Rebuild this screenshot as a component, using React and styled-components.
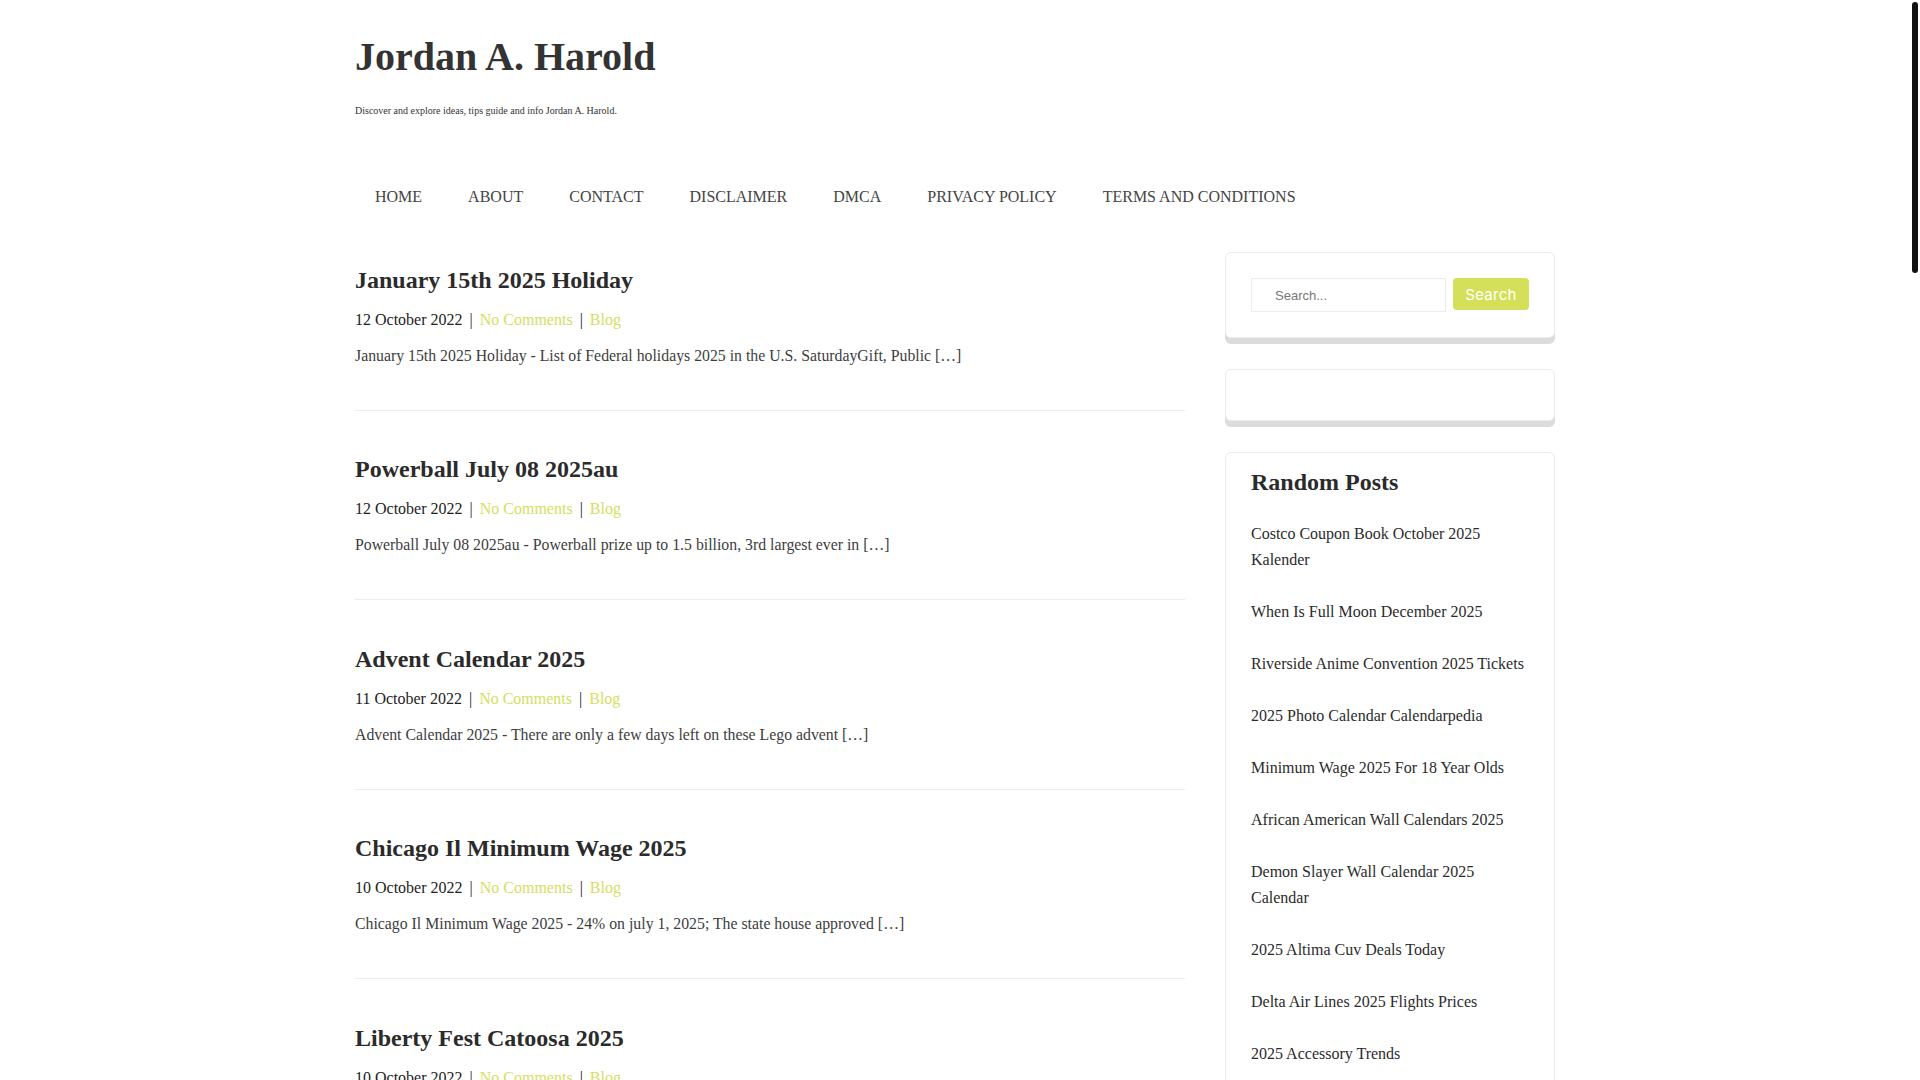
import React from "react";
import styled, { createGlobalStyle } from "styled-components";

const posts = [
  {
    title: "January 15th 2025 Holiday",
    date: "12 October 2022",
    excerpt:
      "January 15th 2025 Holiday - List of Federal holidays 2025 in the U.S. SaturdayGift, Public […]",
  },
  {
    title: "Powerball July 08 2025au",
    date: "12 October 2022",
    excerpt:
      "Powerball July 08 2025au - Powerball prize up to 1.5 billion, 3rd largest ever in […]",
  },
  {
    title: "Advent Calendar 2025",
    date: "11 October 2022",
    excerpt:
      "Advent Calendar 2025 - There are only a few days left on these Lego advent […]",
  },
  {
    title: "Chicago Il Minimum Wage 2025",
    date: "10 October 2022",
    excerpt:
      "Chicago Il Minimum Wage 2025 - 24% on july 1, 2025; The state house approved […]",
  },
  {
    title: "Liberty Fest Catoosa 2025",
    date: "10 October 2022",
    excerpt:
      "Liberty Fest Catoosa 2025 - Celebrate the fourth of july with fireworks, live music and […]",
  },
  {
    title: "Nfl Schedule 2025 Week 1",
    date: "09 October 2022",
    excerpt:
      "Nfl Schedule 2025 Week 1 - The full regular season schedule has been released, and […]",
  },
  {
    title: "Easter Sunday 2025 Date",
    date: "09 October 2022",
    excerpt:
      "Easter Sunday 2025 Date - Easter falls on a different date each year, this year […]",
  },
  {
    title: "Memorial Day Weekend 2025 Events",
    date: "08 October 2022",
    excerpt:
      "Memorial Day Weekend 2025 Events - Parades, concerts and family friendly activities across […]",
  },
  {
    title: "Printable 2025 Monthly Calendar",
    date: "08 October 2022",
    excerpt:
      "Printable 2025 Monthly Calendar - Free templates for every month of the year in […]",
  },
  {
    title: "Mardi Gras 2025 Parade Schedule",
    date: "07 October 2022",
    excerpt:
      "Mardi Gras 2025 Parade Schedule - Find out when and where each krewe will roll […]",
  },
  {
    title: "Tax Brackets 2025 Married Filing Jointly",
    date: "07 October 2022",
    excerpt:
      "Tax Brackets 2025 Married Filing Jointly - The irs has announced the new income […]",
  },
  {
    title: "Spring Break 2025 Dates",
    date: "06 October 2022",
    excerpt:
      "Spring Break 2025 Dates - Most schools and universities will take their break in […]",
  },
  {
    title: "Super Bowl 2025 Halftime Show",
    date: "06 October 2022",
    excerpt:
      "Super Bowl 2025 Halftime Show - The headliner for the big game has been announced […]",
  },
  {
    title: "Lunar New Year 2025 Animal",
    date: "05 October 2022",
    excerpt:
      "Lunar New Year 2025 Animal - The new year begins on january 29 and is the year […]",
  },
  {
    title: "Black Friday 2025 Deals",
    date: "05 October 2022",
    excerpt:
      "Black Friday 2025 Deals - The best early discounts on tech, home goods and […]",
  },
  {
    title: "Thanksgiving 2025 Date",
    date: "04 October 2022",
    excerpt:
      "Thanksgiving 2025 Date - Thanksgiving is celebrated on the fourth thursday of november […]",
  },
  {
    title: "Summer Solstice 2025 Time",
    date: "04 October 2022",
    excerpt:
      "Summer Solstice 2025 Time - The longest day of the year arrives in june when […]",
  },
  {
    title: "Ramadan 2025 Start Date",
    date: "03 October 2022",
    excerpt:
      "Ramadan 2025 Start Date - The holy month is expected to begin on the evening of […]",
  },
  {
    title: "Fourth Of July 2025 Fireworks",
    date: "03 October 2022",
    excerpt:
      "Fourth Of July 2025 Fireworks - Where to watch the biggest displays near you this […]",
  },
  {
    title: "Labor Day 2025 Sales",
    date: "02 October 2022",
    excerpt:
      "Labor Day 2025 Sales - Shop the last big sales weekend of the summer season with […]",
  },
];

const randomPosts = [
  "Costco Coupon Book October 2025 Kalender",
  "When Is Full Moon December 2025",
  "Riverside Anime Convention 2025 Tickets",
  "2025 Photo Calendar Calendarpedia",
  "Minimum Wage 2025 For 18 Year Olds",
  "African American Wall Calendars 2025",
  "Demon Slayer Wall Calendar 2025 Calendar",
  "2025 Altima Cuv Deals Today",
  "Delta Air Lines 2025 Flights Prices",
  "2025 Accessory Trends",
];

const menu = [
  "HOME",
  "ABOUT",
  "CONTACT",
  "DISCLAIMER",
  "DMCA",
  "PRIVACY POLICY",
  "TERMS AND CONDITIONS",
];

const App = () => {
  return (
    <>
      <GlobalStyle />
      <ScrollThumb />
      <Page>
        <Header>
          <SiteTitle href="#">Jordan A. Harold</SiteTitle>
          <Tagline>
            Discover and explore ideas, tips guide and info Jordan A. Harold.
          </Tagline>
        </Header>
        <Menu>
          {menu.map(item => (
            <MenuLink href="#" key={item}>
              {item}
            </MenuLink>
          ))}
        </Menu>
        <Columns>
          <Main>
            {posts.map(post => (
              <Post key={post.title}>
                <PostTitle href="#">{post.title}</PostTitle>
                <Meta>
                  {post.date}
                  <Sep>|</Sep>
                  <MetaLink href="#">No Comments</MetaLink>
                  <Sep>|</Sep>
                  <MetaLink href="#">Blog</MetaLink>
                </Meta>
                <Excerpt>{post.excerpt}</Excerpt>
              </Post>
            ))}
          </Main>
          <Sidebar>
            <Widget>
              <SearchForm onSubmit={e => e.preventDefault()}>
                <SearchInput type="search" placeholder="Search..." />
                <SearchButton type="submit">Search</SearchButton>
              </SearchForm>
            </Widget>
            <Widget />
            <Widget top={15}>
              <WidgetTitle>Random Posts</WidgetTitle>
              <PostList>
                {randomPosts.map(item => (
                  <li key={item}>
                    <a href="#">{item}</a>
                  </li>
                ))}
              </PostList>
            </Widget>
          </Sidebar>
        </Columns>
        <Footer>Copyright © 2025 Jordan A. Harold. All rights reserved.</Footer>
      </Page>
    </>
  );
};

const GlobalStyle = createGlobalStyle`
  html {
    scrollbar-width: none;
  }
  body {
    margin: 0;
    padding-right: 10px;
    background: #fff;
    color: #333;
    font-family: "Liberation Serif", "Times New Roman", serif;
    font-size: 16px;
  }
  a {
    text-decoration: none;
  }
`;

// the page's thin dark scrollbar, drawn over the right edge
const ScrollThumb = styled.div`
  position: fixed;
  top: 2px;
  right: 2px;
  width: 6px;
  height: 271px;
  border-radius: 3px;
  background: #111;
  z-index: 10;
`;

const Page = styled.div`
  width: 1200px;
  margin: 0 auto;
`;

const Header = styled.header`
  padding-top: 33px;
  display: flex;
  flex-direction: column;
`;

const SiteTitle = styled.a`
  font-size: 40px;
  font-weight: bold;
  line-height: 48px;
  color: #333;
  align-self: flex-start;
`;

const Tagline = styled.p`
  margin: 22px 0 0;
  font-size: 10px;
  line-height: 15px;
  color: #333;
`;

const Menu = styled.nav`
  display: flex;
  margin: 67px 0 0 -3px;
`;

const MenuLink = styled.a`
  padding: 0 23px;
  font-size: 16px;
  line-height: 24px;
  color: #444;
`;

const Columns = styled.div`
  display: grid;
  grid-template-columns: 830px 330px;
  gap: 40px;
  margin-top: 43px;
  align-items: start;
`;

const Main = styled.main``;

const Post = styled.article`
  padding: 14px 0 42px;
  margin-bottom: 30.7px;
  border-bottom: 1px solid #ececf0;
`;

const PostTitle = styled.a`
  display: block;
  font-size: 24px;
  font-weight: bold;
  line-height: 1.2;
  color: #2b2b2b;
  margin-bottom: 13px;
`;

const Meta = styled.div`
  font-size: 16px;
  line-height: 24px;
  color: #222;
  margin-bottom: 12px;
`;

const Sep = styled.span`
  margin: 0 7px;
`;

const MetaLink = styled.a`
  color: #d4e05e;
`;

const Excerpt = styled.p`
  margin: 0;
  font-size: 15.8px;
  line-height: 24px;
  color: #3d3d3d;
`;

const Sidebar = styled.aside``;

const Widget = styled.section`
  border: 1px solid #ececf0;
  border-radius: 6px;
  box-shadow: 0 6px 0 #dcdcdc;
  background: #fff;
  padding: ${props => props.top || 25}px 25px 25px;
  margin-bottom: 31px;
`;

const SearchForm = styled.form`
  display: flex;
  gap: 7px;
  align-items: flex-start;
`;

const SearchInput = styled.input`
  box-sizing: border-box;
  width: 195px;
  height: 34px;
  border: 1px solid #ececf0;
  padding: 0 12px 0 23px;
  font-family: "Liberation Sans", Arial, sans-serif;
  font-size: 13px;
  color: #555;
  outline: none;
  &::placeholder {
    color: #777;
  }
`;

const SearchButton = styled.button`
  width: 76px;
  height: 32px;
  border: none;
  border-radius: 4px;
  background: #d4df5a;
  color: #fff;
  font-family: Inter, "Liberation Sans", Arial, sans-serif;
  font-size: 15px;
  letter-spacing: 0.3px;
  cursor: pointer;
`;

const WidgetTitle = styled.h3`
  margin: 0 0 11px;
  font-size: 24px;
  font-weight: bold;
  line-height: 1.2;
  color: #2b2b2b;
`;

const PostList = styled.ul`
  list-style: none;
  margin: 0;
  padding: 0;
  li {
    padding: 13px 0;
    font-size: 16px;
    line-height: 26px;
  }
  a {
    color: #2b2b2b;
  }
`;

const Footer = styled.footer`
  padding: 40px 0 60px;
  font-size: 14px;
  color: #555;
`;

export default App;
